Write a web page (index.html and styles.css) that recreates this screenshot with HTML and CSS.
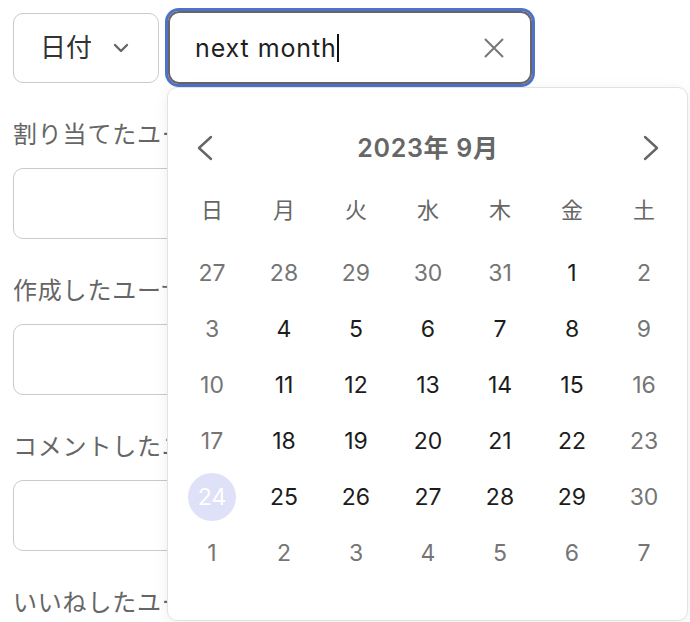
FILE: index.html
```html
<!DOCTYPE html>
<html lang="ja">
<head>
<meta charset="utf-8">
<title>Filter</title>
<link rel="stylesheet" href="styles.css">
</head>
<body>
<div class="page">
  <div class="toolbar">
    <button class="select" type="button">
      <span class="select-label">日付</span>
      <svg class="select-chevron" width="16" height="10" viewBox="0 0 16 10"><polyline points="2,2 8,8 14,2" fill="none" stroke="#666" stroke-width="2.4" stroke-linecap="round" stroke-linejoin="round"/></svg>
    </button>
    <div class="search">
      <span class="query">next month</span><span class="caret"></span>
      <svg class="clear" width="20" height="20" viewBox="0 0 20 20"><path d="M1 1 L19 19 M19 1 L1 19" fill="none" stroke="#777" stroke-width="2"/></svg>
    </div>
  </div>

  <div class="fields">
    <div class="field"><div class="label">割り当てたユーザー</div><div class="box"></div></div>
    <div class="field"><div class="label">作成したユーザー</div><div class="box"></div></div>
    <div class="field"><div class="label">コメントしたユーザー</div><div class="box"></div></div>
    <div class="field"><div class="label">いいねしたユーザー</div><div class="box"></div></div>
  </div>

  <div class="popup">
    <div class="cal-head">
      <svg class="nav" width="16" height="26" viewBox="0 0 16 26"><polyline points="14,2 2,13 14,24" fill="none" stroke="#666" stroke-width="2.4" stroke-linecap="round" stroke-linejoin="round"/></svg>
      <div class="cal-title">2023年 9月</div>
      <svg class="nav" width="16" height="26" viewBox="0 0 16 26"><polyline points="2,2 14,13 2,24" fill="none" stroke="#666" stroke-width="2.4" stroke-linecap="round" stroke-linejoin="round"/></svg>
    </div>
    <div class="grid weekdays">
      <div class="wd">日</div><div class="wd">月</div><div class="wd">火</div><div class="wd">水</div><div class="wd">木</div><div class="wd">金</div><div class="wd">土</div>
    </div>
    <div class="grid days">
      <div class="d muted">27</div><div class="d muted">28</div><div class="d muted">29</div><div class="d muted">30</div><div class="d muted">31</div><div class="d">1</div><div class="d muted">2</div>
      <div class="d muted">3</div><div class="d">4</div><div class="d">5</div><div class="d">6</div><div class="d">7</div><div class="d">8</div><div class="d muted">9</div>
      <div class="d muted">10</div><div class="d">11</div><div class="d">12</div><div class="d">13</div><div class="d">14</div><div class="d">15</div><div class="d muted">16</div>
      <div class="d muted">17</div><div class="d">18</div><div class="d">19</div><div class="d">20</div><div class="d">21</div><div class="d">22</div><div class="d muted">23</div>
      <div class="d today"><span class="today-dot">24</span></div><div class="d">25</div><div class="d">26</div><div class="d">27</div><div class="d">28</div><div class="d">29</div><div class="d muted">30</div>
      <div class="d muted">1</div><div class="d muted">2</div><div class="d muted">3</div><div class="d muted">4</div><div class="d muted">5</div><div class="d muted">6</div><div class="d muted">7</div>
    </div>
  </div>
</div>
</body>
</html>
```

FILE: styles.css
```css
* { box-sizing: border-box; }
html, body { margin: 0; padding: 0; background: #fff; }
body {
  font-family: Inter, "Noto Sans CJK JP", sans-serif;
  width: 690px;
  height: 622px;
  overflow: hidden;
}
.page {
  position: relative;
  width: 690px;
  height: 622px;
  overflow: hidden;
  padding: 11px 0 0 13px;
}
.toolbar {
  display: flex;
  align-items: center;
}
.select {
  width: 146px;
  height: 70px;
  border: 1.5px solid #cacaca;
  border-radius: 10px;
  background: #fff;
  display: flex;
  align-items: center;
  padding: 0 0 0 26px;
  font-family: inherit;
  font-size: 26px;
  color: #333;
  cursor: pointer;
}
.select-label { line-height: 30px; }
.select-chevron { margin-left: 21px; }
.search {
  margin-left: 9px;
  width: 364px;
  height: 73px;
  border: 2px solid #666;
  border-radius: 11px;
  box-shadow: 0 0 0 3px #4f72c9;
  display: flex;
  align-items: center;
  padding: 0 26px 0 25px;
  font-size: 25px;
  color: #1f1f1f;
}
.query { line-height: 30px; letter-spacing: 0.9px; }
.caret {
  display: inline-block;
  width: 2px;
  height: 28px;
  background: #111;
  margin-left: 0;
}
.clear { margin-left: auto; }

.fields {
  margin-top: 36px;
  display: flex;
  flex-direction: column;
}
.field { display: flex; flex-direction: column; }
.label {
  font-size: 24px;
  line-height: 30px;
  color: #666;
  white-space: nowrap;
  letter-spacing: 0.8px;
}
.box {
  margin-top: 18px;
  margin-bottom: 37px;
  width: 420px;
  height: 71px;
  border: 1.5px solid #cacaca;
  border-radius: 10px;
  background: #fff;
}

.popup {
  position: absolute;
  left: 167px;
  top: 87px;
  width: 521px;
  height: 534px;
  background: #fff;
  border: 1px solid #e3e3e3;
  border-radius: 10px;
  box-shadow: 0 2px 14px rgba(0, 0, 0, 0.07);
  padding: 0 8px;
}
.cal-head {
  margin-top: 40px;
  height: 40px;
  display: flex;
  align-items: center;
  justify-content: space-between;
  padding: 0 20px 0 21px;
}
.cal-title {
  font-size: 25px;
  font-weight: 600;
  color: #666;
  line-height: 30px;
  letter-spacing: 0.7px;
}
.grid {
  display: grid;
  grid-template-columns: repeat(7, 72px);
  grid-auto-rows: 56px;
}
.weekdays { margin-top: 12px; }
.days { margin-top: 9px; }
.wd, .d {
  display: flex;
  align-items: center;
  justify-content: center;
  font-size: 22px;
}
.wd { color: #666; }
.d { color: #1c1c1c; font-size: 23px; }
.d.muted { color: #757575; }
.today-dot {
  width: 48px;
  height: 48px;
  border-radius: 50%;
  background: #dfe1f8;
  color: #fff;
  display: flex;
  align-items: center;
  justify-content: center;
}
```
